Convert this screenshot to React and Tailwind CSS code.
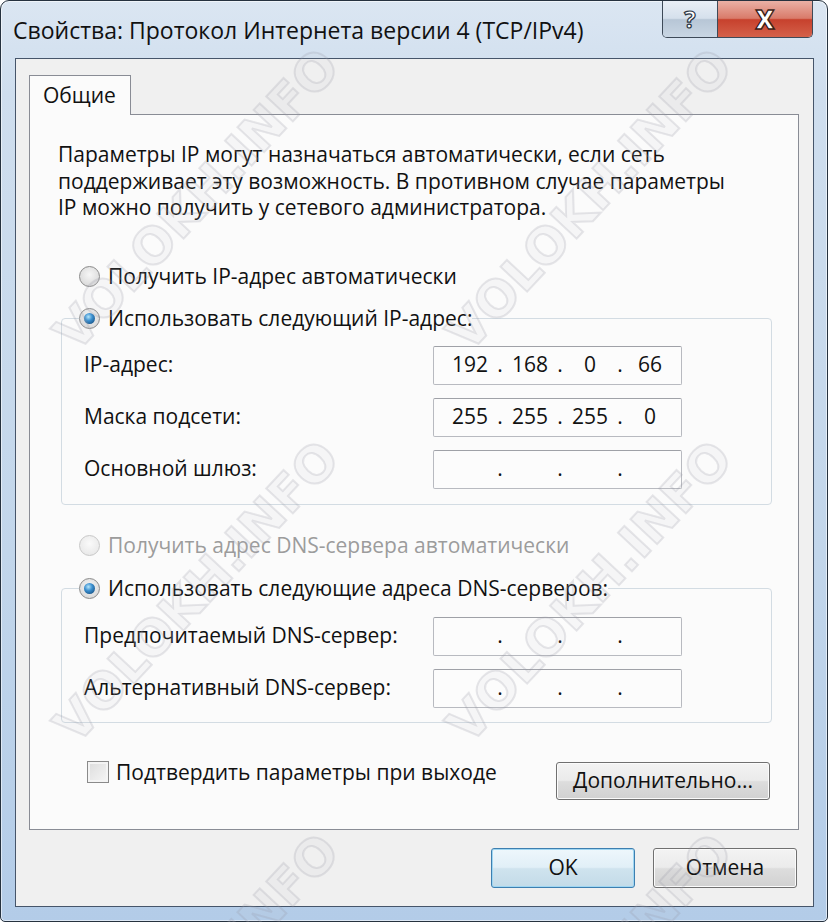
import React from 'react'

const ui = "font-['Open_Sans',sans-serif]"

function Radio({ checked, disabled }) {
  return (
    <span
      className={`flex h-[21px] w-[21px] shrink-0 items-center justify-center rounded-full border ${
        disabled
          ? 'border-[#c8c8c8] bg-[radial-gradient(circle_at_50%_40%,#fafafa,#e4e4e4)]'
          : 'border-[#8a8a8a] bg-[radial-gradient(circle_at_50%_40%,#f6f6f6,#d2d2d2)]'
      }`}
    >
      {checked && (
        <span className="h-[11px] w-[11px] rounded-full bg-[radial-gradient(circle_at_40%_35%,#b6e6fa_0%,#3b8fcf_40%,#0c3d6b_100%)]" />
      )}
    </span>
  )
}

function RadioRow({ checked, disabled, children }) {
  return (
    <div className="flex h-[30px] items-center gap-[8px]">
      <Radio checked={checked} disabled={disabled} />
      <span className={disabled ? 'text-[#9c9c9c]' : 'text-[#111]'}>{children}</span>
    </div>
  )
}

function IpField({ parts = ['', '', '', ''] }) {
  return (
    <div className="flex h-[39px] w-[249px] items-center rounded-[2px] border border-[#b8bac0] border-t-[#9fa1a7] bg-[#fcfcfc] pl-[10px] text-[#111]">
      {parts.map((p, i) => (
        <React.Fragment key={i}>
          <span className="w-[52px] text-center">{p}</span>
          {i < 3 && <span className="w-[8px] text-center">.</span>}
        </React.Fragment>
      ))}
    </div>
  )
}

function FieldRow({ label, parts }) {
  return (
    <div className="flex h-[39px] items-center">
      <span className="w-[349px] text-[#111]">{label}</span>
      <IpField parts={parts} />
    </div>
  )
}

function WinButton({ children, focused, className = '' }) {
  return (
    <button
      className={`flex items-center justify-center rounded-[3px] border text-[#111] ${
        focused
          ? 'border-[#3d7fb0] bg-[linear-gradient(to_bottom,#eef7fc_0%,#e1eff7_48%,#cfe3ee_52%,#c3dbe8_100%)] shadow-[inset_0_0_0_1px_#9fd6f2]'
          : 'border-[#707070] bg-[linear-gradient(to_bottom,#f3f3f3_0%,#ebebeb_48%,#dddddd_52%,#d1d1d1_100%)] shadow-[inset_0_0_0_1px_#fbfbfb]'
      } ${className}`}
    >
      {children}
    </button>
  )
}

// watermark centres
const marks = [
  [197, 200],
  [590, 200],
  [197, 592],
  [590, 592],
  [197, 985],
  [590, 985],
]

export default function App() {
  return (
    <div className={`relative h-[922px] w-[828px] overflow-hidden bg-white text-[21px] ${ui}`}>
      {/* window frame */}
      <div className="flex h-[922px] w-[828px] flex-col rounded-t-[9px] rounded-b-[5px] border border-[#26323f] bg-[linear-gradient(to_bottom,#dbe6f2_0%,#cfdeee_10%,#c2d6eb_60%,#b3cce8_100%)] pb-[14px] shadow-[inset_0_0_0_1px_rgba(255,255,255,0.55)]">
        {/* title bar */}
        <div className="flex h-[57px] items-start">
          <span className="pl-[12px] pt-[13px] text-[23px] leading-[32px] text-[#111]">
            Свойства: Протокол Интернета версии 4 (TCP/IPv4)
          </span>
          <div className="ml-auto mr-[14px] flex h-[37px] overflow-hidden rounded-b-[5px] border border-t-0 border-[#3e4a58]">
            <div className="flex w-[55px] items-center justify-center border-r border-[#3e4a58] bg-[linear-gradient(to_bottom,#e9eff6_0%,#d5e0ec_48%,#b7c6d6_52%,#c9d6e3_100%)] text-[24px] font-bold leading-none text-white [-webkit-text-stroke:1.2px_#2b3644]">
              ?
            </div>
            <div className="flex w-[94px] items-center justify-center bg-[linear-gradient(to_bottom,#eab1a6_0%,#d97b6a_48%,#c7412d_52%,#d4614a_100%)] text-[26px] font-extrabold leading-none text-white [-webkit-text-stroke:1.4px_#3a1d17]">
              X
            </div>
          </div>
        </div>

        {/* client area */}
        <div className="ml-[14px] mr-[13px] flex flex-1 flex-col border border-[#46556a] bg-[#f0f0f0] pt-[16px]">
          {/* tab */}
          <div className="relative z-10 -mb-px ml-[13px] flex h-[40px] w-[102px] items-center border border-b-0 border-[#898c95] bg-[#fbfbfb] pl-[13px] text-[#111]">
            Общие
          </div>

          {/* tab panel */}
          <div className="ml-[13px] w-[770px] border border-[#898c95] bg-[#fbfbfb] pb-[29px] pl-[28px] pt-[26px]">
            <p className="leading-[26.5px] text-[#111]">
              Параметры IP могут назначаться автоматически, если сеть
              <br />
              поддерживает эту возможность. В противном случае параметры
              <br />
              IP можно получить у сетевого администратора.
            </p>

            <div className="ml-[21px] mt-[41px]">
              <RadioRow>Получить IP-адрес автоматически</RadioRow>
            </div>

            <fieldset className="ml-[3px] mt-[12px] w-[711px] rounded-[4px] border border-[#d3dce3] pb-[15px]">
              <legend className="ml-[17px] p-0">
                <RadioRow checked>Использовать следующий IP-адрес:</RadioRow>
              </legend>
              <div className="mt-[12px] flex flex-col gap-[13px] pl-[22px]">
                <FieldRow label="IP-адрес:" parts={['192', '168', '0', '66']} />
                <FieldRow label="Маска подсети:" parts={['255', '255', '255', '0']} />
                <FieldRow label="Основной шлюз:" />
              </div>
            </fieldset>

            <div className="ml-[21px] mt-[26px]">
              <RadioRow disabled>Получить адрес DNS-сервера автоматически</RadioRow>
            </div>

            <fieldset className="ml-[3px] mt-[13px] w-[711px] rounded-[4px] border border-[#d3dce3] pb-[14px]">
              <legend className="ml-[17px] p-0">
                <RadioRow checked>Использовать следующие адреса DNS-серверов:</RadioRow>
              </legend>
              <div className="mt-[13px] flex flex-col gap-[13px] pl-[22px]">
                <FieldRow label="Предпочитаемый DNS-сервер:" />
                <FieldRow label="Альтернативный DNS-сервер:" />
              </div>
            </fieldset>

            <div className="ml-[29px] mt-[38px] flex items-start">
              <span className="h-[22px] w-[22px] shrink-0 border border-[#8a8a8a] bg-[linear-gradient(135deg,#dcdcdc,#f6f6f6)] shadow-[inset_0_0_0_2px_#f4f4f4]" />
              <span className="ml-[7px] leading-[22px] text-[#111]">
                Подтвердить параметры при выходе
              </span>
              <WinButton className="ml-auto mr-[28px] mt-[1px] h-[38px] w-[214px]">
                Дополнительно...
              </WinButton>
            </div>
          </div>

          {/* dialog buttons */}
          <div className="mr-[16px] mt-[18px] flex justify-end gap-[18px]">
            <WinButton focused className="h-[40px] w-[144px]">
              OK
            </WinButton>
            <WinButton className="h-[40px] w-[144px]">Отмена</WinButton>
          </div>
        </div>
      </div>

      {/* watermark */}
      {marks.map(([x, y], i) => (
        <span
          key={i}
          className="pointer-events-none absolute -translate-x-1/2 -translate-y-1/2 rotate-[-47deg] whitespace-nowrap font-['DejaVu_Sans',sans-serif] text-[50px] font-bold text-[rgba(200,200,210,0.1)] [-webkit-text-stroke:2px_rgba(150,150,165,0.22)]"
          style={{ left: x, top: y }}
        >
          VOLOKH.INFO
        </span>
      ))}
    </div>
  )
}
